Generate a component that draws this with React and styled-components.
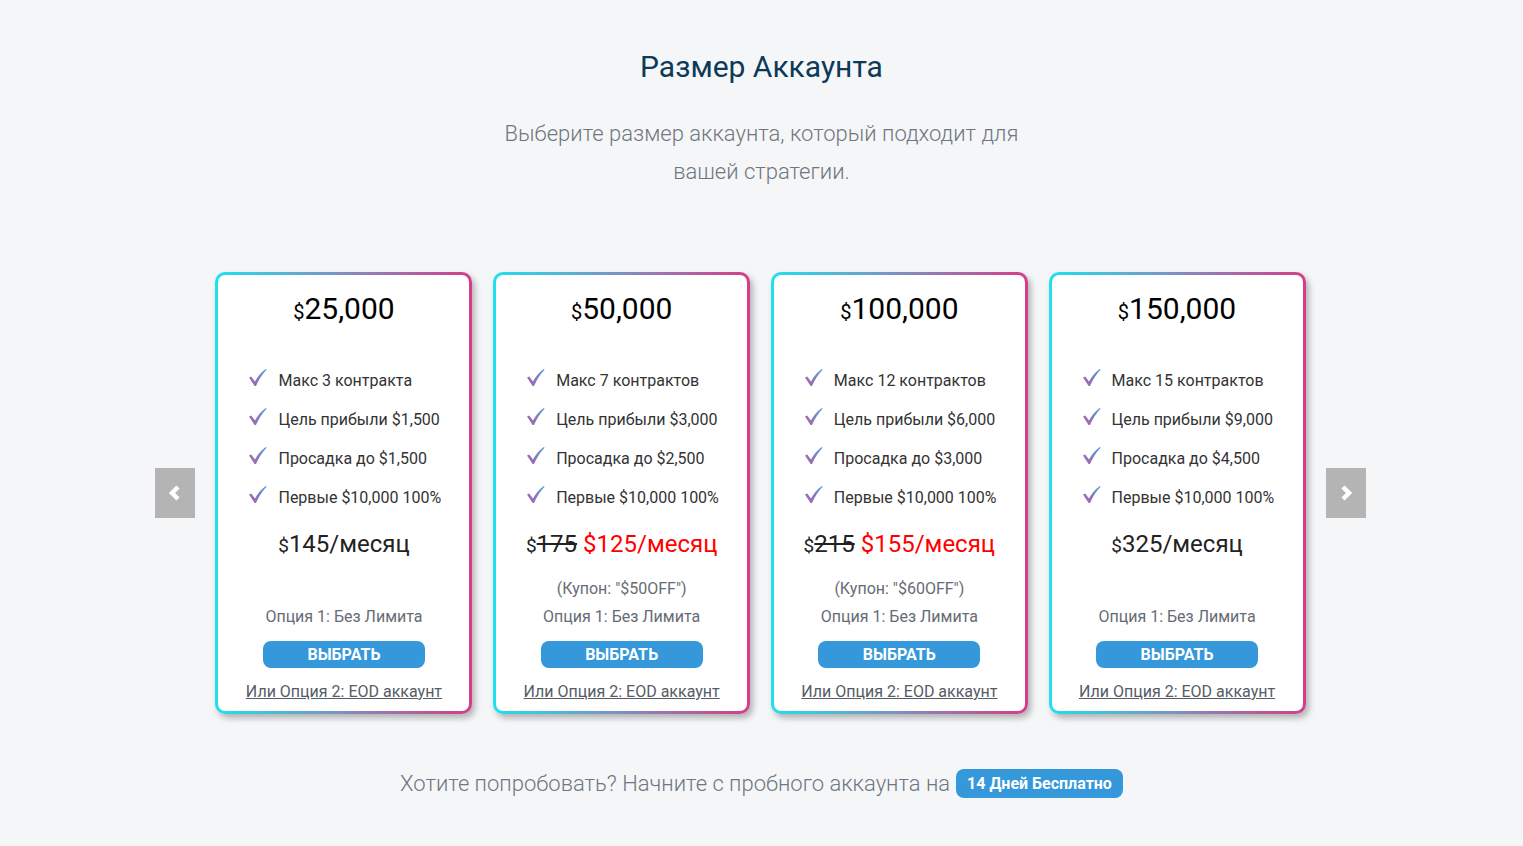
import React from 'react';
import styled, { createGlobalStyle } from 'styled-components';

const GlobalStyle = createGlobalStyle`
  html, body {
    margin: 0;
    padding: 0;
    background: #f5f6f8;
    font-family: Roboto, "Liberation Sans", Arial, sans-serif;
  }
`;

const plans = [
  {
    size: '25,000',
    features: ['Макс 3 контракта', 'Цель прибыли $1,500', 'Просадка до $1,500', 'Первые $10,000 100%'],
    price: '145',
  },
  {
    size: '50,000',
    features: ['Макс 7 контрактов', 'Цель прибыли $3,000', 'Просадка до $2,500', 'Первые $10,000 100%'],
    oldPrice: '175',
    price: '125',
    coupon: '(Купон: "$50OFF")',
  },
  {
    size: '100,000',
    features: ['Макс 12 контрактов', 'Цель прибыли $6,000', 'Просадка до $3,000', 'Первые $10,000 100%'],
    oldPrice: '215',
    price: '155',
    coupon: '(Купон: "$60OFF")',
  },
  {
    size: '150,000',
    features: ['Макс 15 контрактов', 'Цель прибыли $9,000', 'Просадка до $4,500', 'Первые $10,000 100%'],
    price: '325',
  },
];

const Page = styled.div`
  min-height: 846px;
  display: flex;
  flex-direction: column;
  align-items: center;
  padding-top: 48px;
  box-sizing: border-box;
`;

const Title = styled.h2`
  margin: 0;
  font-size: 30px;
  line-height: 38px;
  font-weight: 400;
  color: #0d3a58;
`;

const Subtitle = styled.p`
  margin: 29px 0 0;
  width: 560px;
  text-align: center;
  font-size: 22px;
  line-height: 38px;
  font-weight: 300;
  color: #6f7680;
`;

const Slider = styled.div`
  margin-top: 81px;
  display: flex;
  align-items: center;
  gap: 20px;
  margin-left: -2px;
`;

const Arrow = styled.button`
  width: 40px;
  height: 50px;
  border: 0;
  padding: 0;
  background: #b4b4b4;
  display: flex;
  align-items: center;
  justify-content: center;
  cursor: pointer;
`;

const Cards = styled.div`
  display: grid;
  grid-template-columns: repeat(4, 257px);
  gap: 20.7px;
`;

const Card = styled.div`
  box-sizing: border-box;
  height: 442px;
  border: 3px solid transparent;
  border-radius: 10px;
  background:
    linear-gradient(#fff, #fff) padding-box,
    linear-gradient(90deg, #1fe0ef 0%, #7f8fc0 50%, #d83b88 100%) border-box;
  box-shadow: 3px 4px 6px rgba(0, 0, 0, 0.28);
  padding: 16px 0 0;
  display: flex;
  flex-direction: column;
  align-items: center;
  color: #222;
`;

const Amount = styled.div`
  font-size: 30px;
  line-height: 36px;
  color: #000;
  small {
    font-size: 20px;
  }
`;

const Features = styled.ul`
  list-style: none;
  margin: 31px 0 0;
  padding: 0 0 0 30px;
  align-self: stretch;
`;

const Feature = styled.li`
  display: flex;
  align-items: center;
  gap: 11px;
  height: 39px;
  font-size: 16px;
  color: #333;
  svg {
    margin-top: -6px;
    flex-shrink: 0;
  }
`;

const Price = styled.div`
  margin-top: 12px;
  font-size: 24px;
  line-height: 30px;
  color: #222;
  small {
    font-size: 19px;
  }
  s {
    color: #222;
  }
`;

const Sale = styled.span`
  color: #ff0000;
`;

const Note = styled.div`
  margin-top: ${(p) => p.$top || 0}px;
  font-size: 16px;
  line-height: 28px;
  height: 28px;
  color: #666c75;
`;

const SelectButton = styled.button`
  margin-top: 10px;
  width: 162px;
  height: 27px;
  border: 0;
  border-radius: 8px;
  background: #3498db;
  color: #fff;
  font-family: inherit;
  font-size: 16px;
  font-weight: 700;
  cursor: pointer;
`;

const EodLink = styled.a`
  margin-top: 12px;
  font-size: 16px;
  line-height: 24px;
  color: #555c66;
  text-decoration: underline;
`;

const Trial = styled.div`
  margin-top: 55px;
  display: flex;
  align-items: center;
  gap: 6px;
  font-size: 22px;
  font-weight: 300;
  color: #6f7680;
`;

const Badge = styled.span`
  background: #3498db;
  color: #fff;
  font-size: 16px;
  font-weight: 700;
  border-radius: 8px;
  padding: 0 11px;
  line-height: 29px;
`;

const Check = ({ id }) => (
  <svg width="19" height="19" viewBox="0 0 19 19">
    <defs>
      <linearGradient id={id} x1="1" y1="0" x2="0" y2="1">
        <stop offset="0%" stopColor="#4ba3d9" />
        <stop offset="100%" stopColor="#b45ba8" />
      </linearGradient>
    </defs>
    <path
      d="M1 9.5 L3.2 8.6 L7 13.5 Q11 6 17.8 1 L18.6 1.8 Q12.5 8 8 18 L6.6 18 Z"
      fill={`url(#${id})`}
    />
  </svg>
);

const Chevron = ({ dir }) => (
  <svg width="14" height="18" viewBox="0 0 14 18">
    <path
      d={dir === 'left' ? 'M10 3 L4 9 L10 15' : 'M4 3 L10 9 L4 15'}
      stroke="#fff"
      strokeWidth="4.5"
      fill="none"
      strokeLinejoin="miter"
    />
  </svg>
);

const App = () => (
  <>
    <GlobalStyle />
    <Page>
      <Title>Размер Аккаунта</Title>
      <Subtitle>Выберите размер аккаунта, который подходит для вашей стратегии.</Subtitle>
      <Slider>
        <Arrow aria-label="prev">
          <Chevron dir="left" />
        </Arrow>
        <Cards>
          {plans.map((plan, i) => (
            <Card key={plan.size}>
              <Amount>
                <small>$</small>
                {plan.size}
              </Amount>
              <Features>
                {plan.features.map((f, j) => (
                  <Feature key={f}>
                    <Check id={`chk-${i}-${j}`} />
                    {f}
                  </Feature>
                ))}
              </Features>
              <Price>
                {plan.oldPrice ? (
                  <>
                    <small>$</small>
                    <s>{plan.oldPrice}</s> <Sale>${plan.price}/месяц</Sale>
                  </>
                ) : (
                  <>
                    <small>$</small>
                    {plan.price}/месяц
                  </>
                )}
              </Price>
              <Note $top={14}>{plan.coupon || ''}</Note>
              <Note>Опция 1: Без Лимита</Note>
              <SelectButton>ВЫБРАТЬ</SelectButton>
              <EodLink href="#">Или Опция 2: EOD аккаунт</EodLink>
            </Card>
          ))}
        </Cards>
        <Arrow aria-label="next">
          <Chevron dir="right" />
        </Arrow>
      </Slider>
      <Trial>
        Хотите попробовать? Начните с пробного аккаунта на
        <Badge>14 Дней Бесплатно</Badge>
      </Trial>
    </Page>
  </>
);

export default App;
